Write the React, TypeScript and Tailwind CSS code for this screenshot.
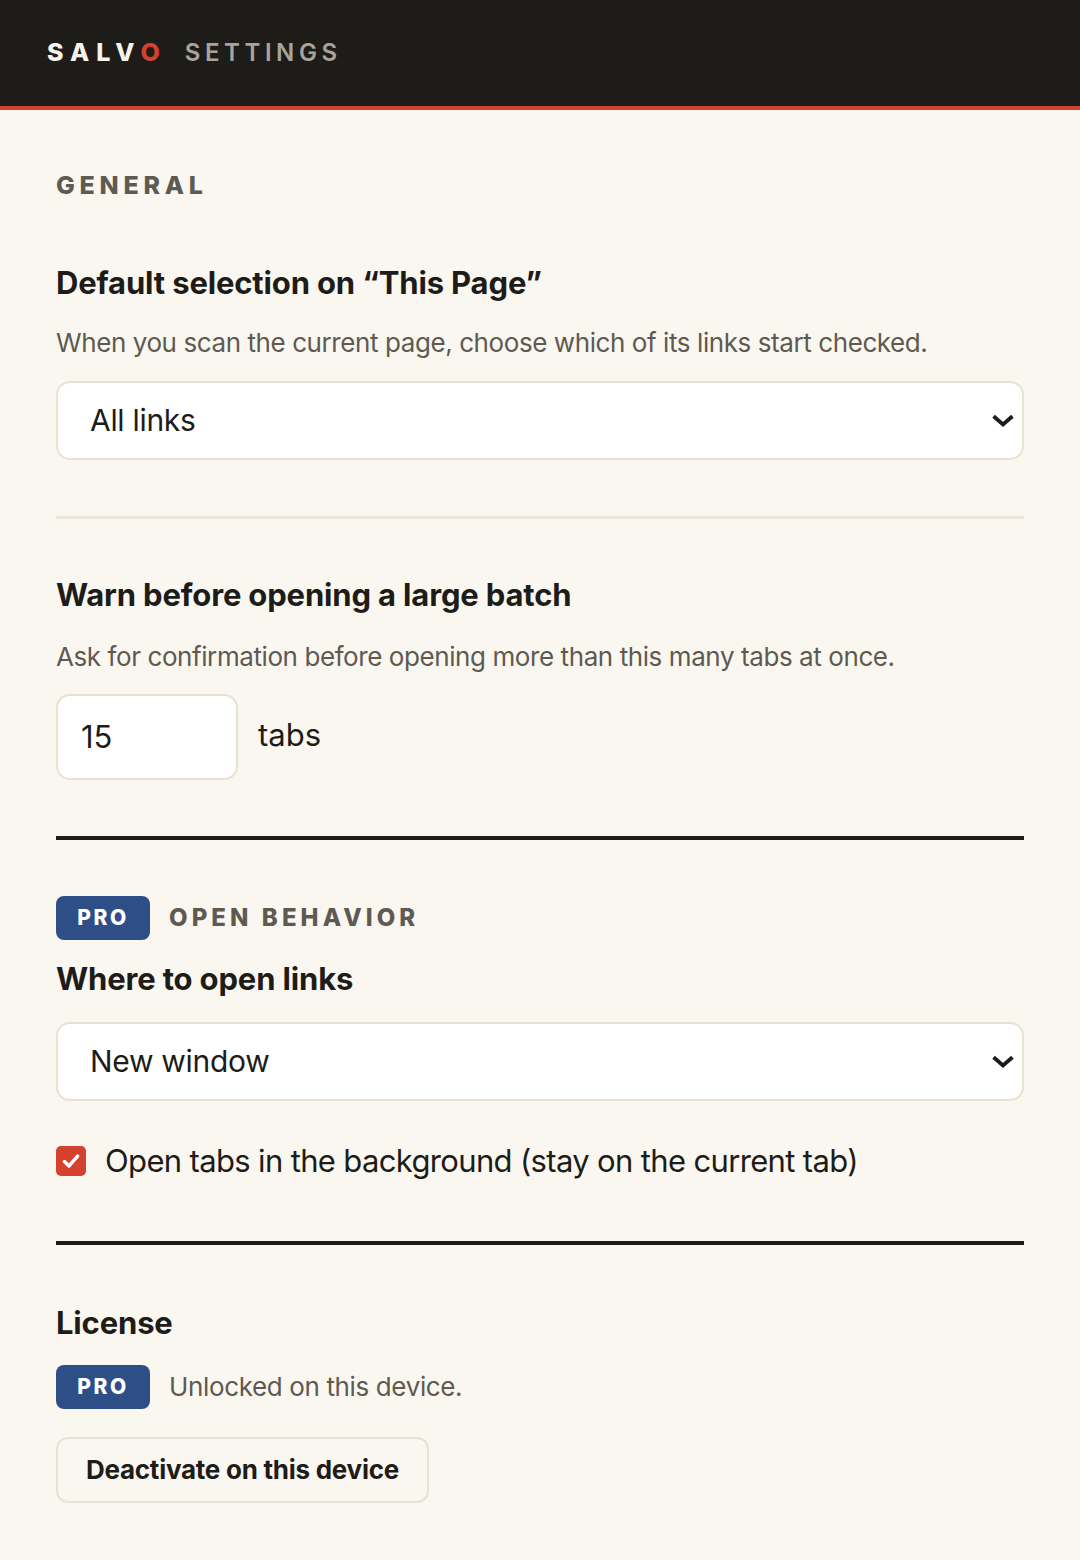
const font = { fontFamily: "Inter, 'Liberation Sans', sans-serif" };

function Chevron() {
  return (
    <svg width="22" height="14" viewBox="0 0 22 14" fill="none" className="absolute right-[8px] top-1/2 -translate-y-1/2">
      <path d="M3 3.5 L11 10.5 L19 3.5" stroke="#1e1c19" strokeWidth="3.8" strokeLinecap="square" />
    </svg>
  );
}

function SelectBox({ value }: { value: string }) {
  return (
    <div className="relative flex items-center h-[79px] rounded-[14px] border-2 border-[#e8e2d4] bg-white pl-[32px] text-[30px] tracking-[-0.01em] text-[#1e1c19]">
      {value}
      <Chevron />
    </div>
  );
}

function ProBadge() {
  return (
    <span className="inline-flex items-center justify-center w-[94px] h-[44px] rounded-[8px] bg-[#2d4e86] text-white text-[21px] font-extrabold tracking-[0.12em]">
      PRO
    </span>
  );
}

export default function App() {
  return (
    <div className="min-h-[1560px] bg-[#faf7f0]" style={font}>
      <header className="h-[110px] bg-[#1e1c19] border-b-4 border-[#d4412f] flex items-center pl-[47px]">
        <span className="text-[25px] font-extrabold tracking-[0.28em] text-[#f7f3ea]">
          SALV<span className="text-[#d4412f]">O</span>
        </span>
        <span className="ml-[18px] text-[24px] font-semibold tracking-[0.19em] text-[#a8a49c]">SETTINGS</span>
      </header>

      <main className="px-[56px]">
        <div className="pt-[63px] text-[25px] font-extrabold tracking-[0.19em] text-[#5e5a52] leading-[1]">GENERAL</div>

        <h2 className="mt-[65px] text-[31px] font-bold text-[#1e1c19] leading-[40px] tracking-[-0.005em]">Default selection on “This Page”</h2>
        <p className="mt-[24px] text-[26px] text-[#5e5a52] leading-[32px] tracking-[-0.016em]">When you scan the current page, choose which of its links start checked.</p>
        <div className="mt-[22px]">
          <SelectBox value="All links" />
        </div>

        <div className="mt-[56px] h-[3px] bg-[#ebe5d6]" />

        <h2 className="mt-[56px] text-[31px] font-bold text-[#1e1c19] leading-[40px] tracking-[-0.005em]">Warn before opening a large batch</h2>
        <p className="mt-[26px] text-[26px] text-[#5e5a52] leading-[32px] tracking-[-0.016em]">Ask for confirmation before opening more than this many tabs at once.</p>
        <div className="mt-[21px] flex items-center gap-[20px]">
          <div className="w-[182px] h-[86px] rounded-[14px] border-2 border-[#e8e2d4] bg-white flex items-center pl-[23px] text-[31px] text-[#1e1c19]">15</div>
          <span className="text-[31px] text-[#1e1c19] pb-[4px]">tabs</span>
        </div>

        <div className="mt-[56px] h-[4px] bg-[#1e1c19]" />

        <div className="mt-[56px] flex items-center gap-[19px]">
          <ProBadge />
          <span className="text-[24px] font-extrabold tracking-[0.17em] text-[#5e5a52]">OPEN BEHAVIOR</span>
        </div>
        <h2 className="mt-[19px] text-[31px] font-bold text-[#1e1c19] leading-[40px] tracking-[-0.005em]">Where to open links</h2>
        <div className="mt-[23px]">
          <SelectBox value="New window" />
        </div>
        <label className="mt-[37px] flex items-center gap-[19px]">
          <span className="w-[30px] h-[30px] rounded-[5px] bg-[#d4412f] flex items-center justify-center">
            <svg width="22" height="22" viewBox="0 0 20 20" fill="none">
              <path d="M4 10.5 L8.2 14.5 L16 5.5" stroke="white" strokeWidth="3.2" strokeLinecap="round" strokeLinejoin="round" />
            </svg>
          </span>
          <span className="text-[31px] text-[#1e1c19] tracking-[-0.021em]">Open tabs in the background (stay on the current tab)</span>
        </label>

        <div className="mt-[56px] h-[4px] bg-[#1e1c19]" />

        <h2 className="mt-[58px] text-[31px] font-bold text-[#1e1c19] leading-[40px] tracking-[-0.005em]">License</h2>
        <div className="mt-[22px] flex items-center gap-[19px]">
          <ProBadge />
          <span className="text-[26px] text-[#5e5a52] tracking-[-0.014em]">Unlocked on this device.</span>
        </div>
        <button className="mt-[28px] h-[66px] px-[28px] rounded-[12px] border-2 border-[#e8e2d4] text-[26px] font-bold text-[#1e1c19] tracking-[-0.01em]">
          Deactivate on this device
        </button>
      </main>
    </div>
  );
}
